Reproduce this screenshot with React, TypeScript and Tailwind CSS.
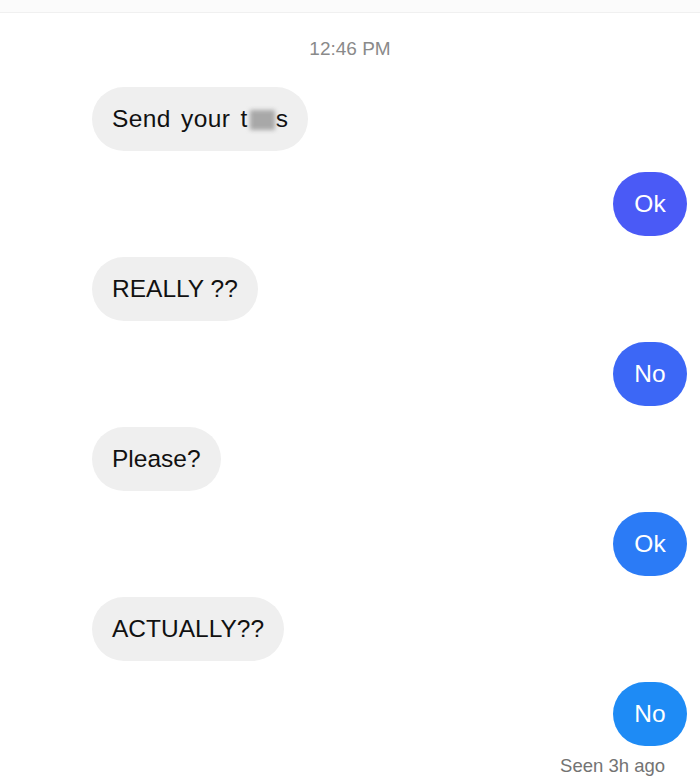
const font = { fontFamily: '"Liberation Sans", Arial, sans-serif' };

type Msg = { side: 'in' | 'out'; text: React.ReactNode; color?: string };

const messages: Msg[] = [
  {
    side: 'in',
    text: (
      <span className="tracking-[0.4px] [word-spacing:3px]">
        Send your t
        <span className="ml-[2px] mr-[1px] inline-block h-[20px] w-[25px] translate-y-[3px] bg-[#a8a8a8] blur-[2px]" />
        s
      </span>
    ),
  },
  { side: 'out', text: 'Ok', color: 'bg-[#4a5af6]' },
  { side: 'in', text: 'REALLY ??' },
  { side: 'out', text: 'No', color: 'bg-[#3c67f6]' },
  { side: 'in', text: 'Please?' },
  { side: 'out', text: 'Ok', color: 'bg-[#2b7bf6]' },
  { side: 'in', text: 'ACTUALLY??' },
  { side: 'out', text: 'No', color: 'bg-[#1e8bf5]' },
];

function Bubble({ msg }: { msg: Msg }) {
  if (msg.side === 'out') {
    return (
      <div className="flex justify-end pr-[13px]">
        <div
          className={`flex h-[64px] w-[74px] items-center justify-center rounded-full text-[24.5px] text-white ${msg.color}`}
        >
          {msg.text}
        </div>
      </div>
    );
  }
  return (
    <div className="flex pl-[92px]">
      <div className="flex h-[64px] items-center rounded-full bg-[#efefef] px-[20px] text-[24.5px] text-[#111]">
        <span>{msg.text}</span>
      </div>
    </div>
  );
}

export default function App() {
  return (
    <div className="h-[780px] w-[700px] overflow-hidden bg-white" style={font}>
      <div className="h-[13px] border-b border-[#f0f0f0] bg-[#fbfbfb]" />
      <div className="pt-[26px] text-center text-[19px] leading-[19px] text-[#8a8a8a]">12:46 PM</div>
      <div className="mt-[29px] flex flex-col gap-[21px]">
        {messages.map((m, i) => (
          <Bubble key={i} msg={m} />
        ))}
      </div>
      <div className="mt-[11px] pr-[35px] text-right text-[18.5px] leading-[18px] text-[#737373]">Seen 3h ago</div>
    </div>
  );
}
